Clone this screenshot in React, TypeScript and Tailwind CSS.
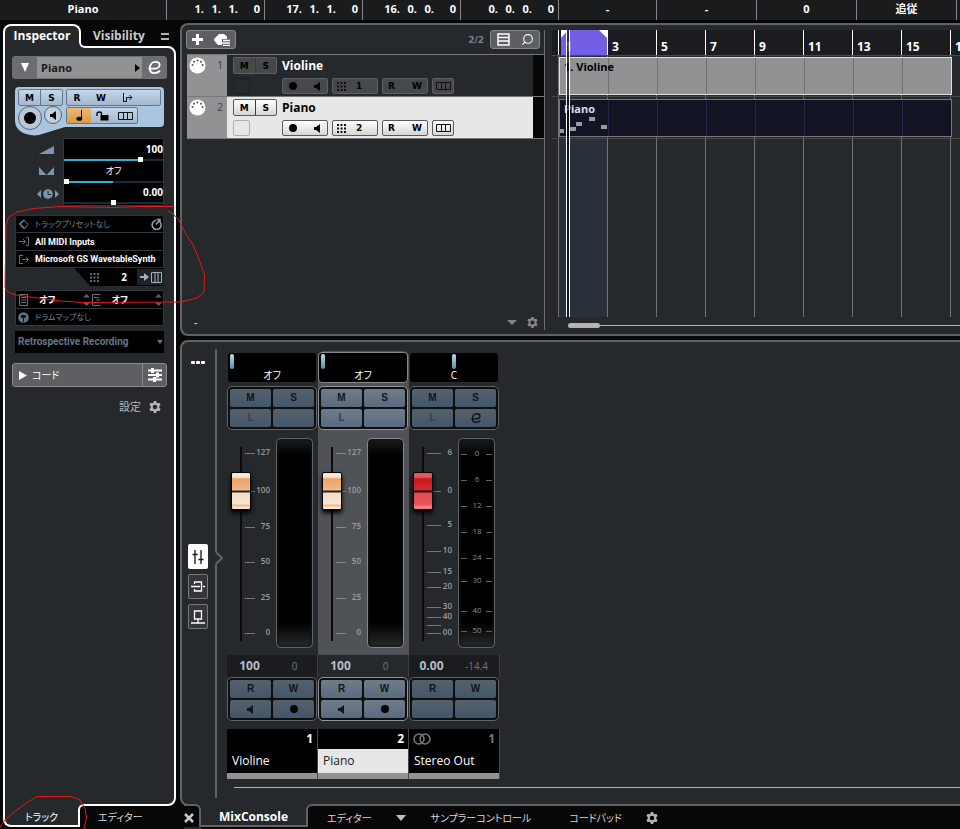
import React from "react";
import { Search } from "lucide-react";

const positions = [
  ["1.", "1.", "1.", "0"],
  ["17.", "1.", "1.", "0"],
  ["16.", "0.", "0.", "0"],
  ["0.", "0.", "0.", "0"],
];

const Speaker = ({ className = "" }: { className?: string }) => (
  <svg width="7" height="9" viewBox="0 0 7 9" className={className} fill="currentColor" aria-hidden="true">
    <path d="M0 3h2L6 0v9L2 6H0z" />
  </svg>
);

const Dot = () => <span className="block size-2 rounded-full bg-black" />;

const GridDots = ({ color }: { color: string }) => (
  <svg width="9" height="9" viewBox="0 0 9 9" fill={color} aria-hidden="true">
    {[0, 3.5, 7].map((y) => [0, 3.5, 7].map((x) => <rect key={`${x}-${y}`} x={x} y={y} width="2" height="2" />))}
  </svg>
);

const Lanes = ({ color = "#111" }: { color?: string }) => (
  <svg width="15" height="8" viewBox="0 0 15 8" fill="none" stroke={color} aria-hidden="true">
    <path d="M.5 .5h14v7H.5zM5.5 .5v7M9.5 .5v7" />
  </svg>
);

const EditGlyph = ({ size, color }: { size: number; color: string }) => (
  <svg width={size} height={size} viewBox="0 0 14 14" fill="none" stroke={color} strokeWidth="2" aria-hidden="true">
    <path d="M0.500 8.200H7C10 8.200 12.500 6.500 12.500 4.300 12.500 2 10.500 1 8 1 4.500 1 2 4 2 8 2 11.500 4 13 7 13 9.500 13 11.500 12 13 10.500" />
  </svg>
);

const Gear = ({ color, size = 12 }: { color: string; size?: number }) => (
  <svg width={size} height={size} viewBox="0 0 12 12" fill={color} fillRule="evenodd" aria-hidden="true">
    <path d="M4.800 0h2.400l.4 1.700 1.100.6 1.700-.5 1.200 2.100-1.300 1.200v1.800l1.300 1.200-1.200 2.100-1.700-.5-1.100.6L7.200 12H4.800l-.4-1.700-1.100-.6-1.700.5L.400 8.100l1.300-1.200V5.100L.400 3.900l1.200-2.100 1.700.5 1.100-.6zM6 3.700a2.300 2.300 0 1 0 0 4.600 2.300 2.300 0 0 0 0-4.600z" />
  </svg>
);

function TransportBar() {
  return (
    <header className="flex h-5 shrink-0 bg-[#191b1d] pr-[3px] font-bold text-white">
      <div className="flex w-[167px] shrink-0 items-center justify-center border-r border-[#85878a] pb-0.5">Piano</div>
      <div className="grid flex-1 grid-cols-[98fr_98fr_98fr_98fr_98fr_100fr_100fr_100fr]">
        {positions.map((p, i) => (
          <div key={i} className="flex items-center justify-end border-r border-[#85878a] pr-1 pb-0.5">
            <span>{p[0]}</span>
            <span className="w-[17px] text-right">{p[1]}</span>
            <span className="w-[17px] text-right">{p[2]}</span>
            <span className="w-[22px] text-right">{p[3]}</span>
          </div>
        ))}
        {["-", "-", "0", "追従"].map((t, i) => (
          <div key={i} className="flex items-center justify-center border-r border-[#85878a] pb-0.5">
            {t}
          </div>
        ))}
      </div>
    </header>
  );
}

function InspectorHeader() {
  return (
    <div className="flex h-[23px] items-center rounded-[3px] border border-[#6f7072] bg-[#929294]">
      <button aria-label="Collapse" className="flex h-full w-6 items-center justify-center bg-[#6c6d70]">
        <svg width="8" height="9" viewBox="0 0 8 9" fill="#fff"><path d="M0 0h8L4 9z" /></svg>
      </button>
      <span className="flex-1 pl-1 font-bold text-[#1a1a1c]">Piano</span>
      <svg width="5" height="8" viewBox="0 0 5 8" className="mr-0.5"><path d="M0 0l5 4-5 4z" fill="#000" /></svg>
      <button aria-label="Edit channel" className="flex h-full w-6 items-center justify-center bg-[#6c6d70]">
        <EditGlyph size={13} color="#fff" />
      </button>
    </div>
  );
}

const blueBox = "flex h-[17px] items-center rounded-[2px] border border-[#66788a] bg-linear-to-b from-[#c6d8ea] to-[#a2b8d0]";

function TrackControls() {
  return (
    <div className="relative mx-[3px] mt-2 h-[49px]">
      <svg className="absolute inset-0 h-full w-full" viewBox="0 0 149 49" preserveAspectRatio="none" aria-hidden="true">
        <path d="M4 0H145a4 4 0 0 1 4 4V36a4 4 0 0 1-4 4H50L24 48C12 50 0 44 0 34V4a4 4 0 0 1 4-4z" fill="#abc5df" />
      </svg>
      <div className="relative px-[3px] pt-0.5 font-['DejaVu_Sans'] text-[9px] font-bold text-black">
        <div className="flex gap-[3px]">
          <div className={blueBox + " w-[45px]"}>
            <button className="h-full flex-1 border-r border-[#66788a]">M</button>
            <button className="h-full flex-1">S</button>
          </div>
          <div className={blueBox + " flex-1"}>
            <button className="w-6 pr-1">R</button>
            <button className="w-6 pr-1">W</button>
            <button aria-label="Lane mode" className="flex w-6 justify-center">
              <svg width="11" height="10" viewBox="0 0 11 10" fill="none" stroke="#111"><path d="M1.500 0v8.500h3M4.500 8.500v-4h5M7.500 2l2.500 2.500L7.500 7" /></svg>
            </button>
          </div>
        </div>
        <div className="flex">
          <button aria-label="Record enable" className="flex size-6 items-center justify-center rounded-full border border-[#55626e] bg-[#b9c6d4]">
            <span className="size-3 rounded-full bg-black" />
          </button>
          <button aria-label="Monitor" className="ml-0.5 flex size-[18px] items-center justify-center rounded-full border border-[#55626e] bg-[#c3d1df] text-black">
            <Speaker />
          </button>
          <div className={blueBox + " mt-px ml-1 w-[72px]"}>
            <button aria-label="Musical time base" className="flex h-full w-6 items-center justify-center bg-linear-to-b from-[#e9b877] to-[#d89a48]">
              <svg width="7" height="11" viewBox="0 0 7 11"><path d="M5 0h1v8H5z" fill="#000" /><ellipse cx="3.300" cy="8.800" rx="2.900" ry="2" fill="#000" /></svg>
            </button>
            <button aria-label="Lock" className="flex w-[22px] justify-center">
              <svg width="13" height="10" viewBox="0 0 13 10"><path d="M4.500 4h8v5.500h-8z" fill="#000" /><path d="M1 5V2.500C1 .500 5.500 .500 5.500 2.500V5" fill="none" stroke="#000" strokeWidth="1.300" /></svg>
            </button>
            <button aria-label="Lanes" className="flex flex-1 justify-center"><Lanes /></button>
          </div>
        </div>
      </div>
    </div>
  );
}

const hSlider =
  "block h-[5px] w-full appearance-none bg-center bg-no-repeat bg-size-[100%_2px] [&::-webkit-slider-thumb]:h-[5px] [&::-webkit-slider-thumb]:w-[5px] [&::-webkit-slider-thumb]:appearance-none [&::-webkit-slider-thumb]:bg-white";

function ChannelSliders() {
  return (
    <div className="mx-[3px] mt-0.5 flex">
      <div className="flex w-12 flex-col items-end gap-3 pt-2 pr-2">
        <svg width="16" height="9" viewBox="0 0 16 9"><path d="M0 8L15 0v8z" fill="#7f93ad" /></svg>
        <svg width="16" height="10" viewBox="0 0 16 10"><path d="M0 0l7.500 8L15 0v8H0z" fill="#7f93ad" /></svg>
        <svg width="22" height="10" viewBox="0 0 22 10" className="-mr-1">
          <path d="M4 1v8L0 5zM18 1v8l4-4z" fill="#7f93ad" />
          <circle cx="11" cy="5" r="4.800" fill="#7f93ad" />
          <path d="M11 2v3.500h3" stroke="#22262a" fill="none" />
        </svg>
      </div>
      <div className="flex-1 rounded-[2px] border border-[#30363d] bg-black text-white">
        <div className="flex h-[23px] flex-col">
          <span className="h-[18px] pt-0.5 text-right text-[10px] leading-4 font-bold">100</span>
          <input aria-label="Volume" type="range" min={0} max={127} defaultValue={100} className={hSlider + " bg-[linear-gradient(to_right,#35aed0_78%,#1c2836_78%)]"} />
        </div>
        <div className="flex h-[22px] flex-col">
          <span className="h-[17px] pt-px text-center text-[9px] leading-4">オフ</span>
          <input aria-label="Pan" type="range" min={-64} max={64} defaultValue={-64} className={hSlider + " bg-[linear-gradient(to_right,#35aed0_50%,#1c2836_50%)]"} />
        </div>
        <div className="flex h-[21px] flex-col">
          <span className="h-4 text-right text-[10px] leading-4 font-bold">0.00</span>
          <input aria-label="Delay" type="range" min={-100} max={100} defaultValue={0} className={hSlider + " bg-[linear-gradient(to_right,#1c2836,#1c2836)]"} />
        </div>
      </div>
    </div>
  );
}

const UpDown = () => (
  <svg width="7" height="12" viewBox="0 0 7 12" fill="#4f6672" aria-hidden="true"><path d="M0 3.500L3.500 0 7 3.500zM0 8.500L3.500 12 7 8.500z" /></svg>
);

function Routing() {
  return (
    <div className="mx-[3px] mt-[9px] text-[10px] font-bold text-white">
      <div className="rounded-[2px] border border-[#2d3238] bg-black">
        <button className="flex h-[17px] w-full items-center border-b border-[#30363c] text-left">
          <svg width="10" height="11" viewBox="0 0 10 11" className="ml-[3px]" fill="none" stroke="#687e92"><path d="M5 1L9 5.500 6 9.500 1 5z" /><path d="M5 1L1 5l4 4.500" strokeWidth="1.600" /></svg>
          <span className="flex-1 pl-[6px] text-[8px] font-normal text-[#6d8299]">トラックプリセットなし</span>
          <svg width="12" height="12" viewBox="0 0 12 12" className="mr-px" fill="none" stroke="#8fa3b4" strokeWidth="1.500"><path d="M9.500 3.500A4.500 4.500 0 1 1 6 2.500M6 6.500l4-5M6.500 1.500H10v3.500" /></svg>
        </button>
        <button className="flex h-[18px] w-full items-center border-b border-[#30363c] text-left">
          <svg width="11" height="9" viewBox="0 0 11 9" className="ml-[3px]" fill="none" stroke="#5e7585"><path d="M0 4.500h6M4 2l2.500 2.500L4 7M7 .500h2.500v8H7" /></svg>
          <span className="pl-[5px] font-['Roboto'] text-[9px]">All MIDI Inputs</span>
        </button>
        <button className="flex h-4 w-full items-center text-left">
          <svg width="11" height="9" viewBox="0 0 11 9" className="ml-[3px] shrink-0" fill="none" stroke="#5e7585"><path d="M4 .500H.500v8H4M3 4.500h6M7 2l2.500 2.500L7 7" /></svg>
          <span className="pl-[5px] font-['Roboto'] text-[9px] whitespace-nowrap">Microsoft GS WavetableSynth</span>
        </button>
      </div>
      <div className="ml-[59px] flex h-[18px] items-center bg-black [clip-path:polygon(0_0,100%_0,100%_100%,16px_100%)]">
        <span className="ml-4"><GridDots color="#5b6d78" /></span>
        <span className="flex-1 pr-[10px] text-right">2</span>
        <button aria-label="Edit instrument" className="flex h-4 w-[27px] items-center justify-center gap-0.5 bg-[#1d2428]">
          <svg width="9" height="8" viewBox="0 0 9 8" fill="#9fb1be"><path d="M0 3h4V0l5 4-5 4V5H0z" /></svg>
          <svg width="11" height="11" viewBox="0 0 11 11" fill="none" stroke="#9fb1be"><path d="M.500 .500h10v10H.500zM4 1v9M7 1v9" /></svg>
        </button>
      </div>
      <div className="mt-1 rounded-[2px] border border-[#30363c] bg-black">
        <div className="flex h-[18px] items-center border-b border-[#30363c]">
          <svg width="9" height="12" viewBox="0 0 9 12" className="ml-[3px]" fill="none" stroke="#5e7585"><path d="M.500 .500h8v11h-8zM2 3.500h5M2 6h5M2 8.500h5" /></svg>
          <span className="flex-1 pr-4 text-center text-[9px]">オフ</span>
          <UpDown />
          <svg width="9" height="12" viewBox="0 0 9 12" className="ml-0.5" fill="none" stroke="#5e7585"><path d="M8.500 .500h-8v11h8M2 3.500h5M4 6h4M2 8.500h5" /></svg>
          <span className="flex-1 pr-4 text-center text-[9px]">オフ</span>
          <span className="mr-px"><UpDown /></span>
        </div>
        <button className="flex h-4 w-full items-center text-left">
          <svg width="11" height="11" viewBox="0 0 11 11" className="ml-0.5"><circle cx="5.500" cy="5.500" r="5.300" fill="#5e7585" /><path d="M5.500 4v6M3.500 3.500h4v2h-4z" stroke="#0a0d10" fill="#0a0d10" /></svg>
          <span className="pl-[6px] text-[8px] font-normal text-[#6d8299]">ドラムマップなし</span>
        </button>
      </div>
      <button className="mt-[5px] flex h-[22px] w-full items-center justify-between bg-black pr-px pl-[3px] font-['Roboto'] text-[10px] font-bold text-[#64758c]">
        Retrospective Recording
        <svg width="6" height="4" viewBox="0 0 6 4" fill="#64758c"><path d="M0 0h6L3 4z" /></svg>
      </button>
    </div>
  );
}

function Inspector() {
  return (
    <aside className="ml-[3px] flex w-[173px] shrink-0 flex-col pt-1">
      <nav className="relative z-10 -mb-0.5 flex h-6 shrink-0 text-white">
        <div className="flex w-[78px] flex-col border-l-2 border-transparent">
          <button className="-ml-0.5 h-6 rounded-t-lg border-2 border-b-0 border-white bg-[#25292c] pb-0.5 text-xs font-bold">Inspector</button>
        </div>
        <div className="-ml-0.5 flex h-full w-2 items-end">
          <div className="h-2.5 w-full bg-[#25292c]"><div className="h-full rounded-bl-md border-b-2 border-l-2 border-white bg-[#070707]" /></div>
        </div>
        <button className="ml-1.5 text-xs font-bold text-[#c9cacc]">Visibility</button>
        <button aria-label="Menu" className="mt-[9px] mr-[7px] ml-auto h-[7px] w-2 border-y-2 border-[#b4b5b7]" />
      </nav>
      <div className="flex-1 rounded-tr-lg rounded-br-lg border-2 border-white bg-[#25292c] px-[7px] pt-2">
        <InspectorHeader />
        <TrackControls />
        <ChannelSliders />
        <Routing />
        <div className="mt-2.5 flex h-6 items-center rounded-[3px] border border-[#8a8b8e] bg-[#5d5f63] text-white">
          <svg width="8" height="9" viewBox="0 0 8 9" className="ml-1.5" fill="#fff"><path d="M0 0l8 4.500L0 9z" /></svg>
          <span className="flex-1 pl-[5px] text-[10px]">コード</span>
          <button aria-label="Chord settings" className="flex h-full w-6 items-center justify-center border-l border-[#8a8b8e]">
            <svg width="14" height="14" viewBox="0 0 14 14" fill="#fff"><path d="M0 1.500h14v2H0zM0 6h14v2H0zM0 10.500h14v2H0zM3 0h3v5H3zM8 4.500h3v5H8zM5 9h3v5H5z" /></svg>
          </button>
        </div>
        <button className="mt-3 mr-[6px] ml-auto flex items-center gap-2 text-[11px] leading-4 text-[#b4b5b7]">
          設定 <Gear color="#b4b5b7" />
        </button>
      </div>
      <nav className="relative z-10 -mt-0.5 flex h-[25px] shrink-0 text-[10px] text-[#d6d6d8]">
        <button className="h-[23px] w-[75px] rounded-bl-lg border-b-2 border-l-2 border-white bg-[#25292c] pt-1 text-white">トラック</button>
        <div className="h-[23px] w-2 bg-[#25292c]"><div className="h-full rounded-tl-md border-t-2 border-l-2 border-white bg-[#070707]" /></div>
        <button className="ml-3">エディター</button>
      </nav>
    </aside>
  );
}

const MidiIcon = () => (
  <svg width="17" height="17" viewBox="0 0 17 17" aria-hidden="true">
    <circle cx="8.500" cy="8.500" r="8" fill="#fff" />
    <g fill="#555"><circle cx="3.500" cy="8" r="1" /><circle cx="5" cy="4.800" r="1" /><circle cx="8.500" cy="3.500" r="1" /><circle cx="12" cy="4.800" r="1" /><circle cx="13.500" cy="8" r="1" /></g>
  </svg>
);

function TrackRow({ n, name, selected }: { n: number; name: string; selected?: boolean }) {
  const box = selected
    ? "flex h-4 items-center rounded-[2px] border border-[#5a5a5c] bg-linear-to-b from-white to-[#d4d5d7]"
    : "flex h-4 items-center rounded-[2px] border border-[#5c6063] bg-[#45494c]";
  return (
    <div className={"flex h-[42px] border-b border-[#76787a] text-black " + (selected ? "bg-[#e7e7e8]" : "bg-[#25292c]")}>
      <div className="flex w-10 shrink-0 items-start justify-between bg-[#929294] pt-[2px] pr-1 pl-0.5">
        <MidiIcon />
        <span className="text-[10px] leading-[17px] text-[#3c3c3e]">{n}</span>
      </div>
      <div className="flex-1 pt-[2px] pl-[6px] font-['DejaVu_Sans'] text-[9px] font-bold">
        <div className="flex h-[17px] items-center">
          <div className={box + " h-[17px] w-11"}>
            <button className="h-full flex-1 border-r border-[#3a3a3c]">M</button>
            <button className="h-full flex-1">S</button>
          </div>
          <span className={"pl-[5px] font-['Open_Sans'] text-xs font-bold " + (selected ? "text-black" : "text-white")}>{name}</span>
        </div>
        <div className="mt-1 flex">
          <button aria-label="Lock" className={"mr-8 h-4 w-[17px] rounded-[2px] border " + (selected ? "border-[#b0b0b2]" : "border-[#1b1e20]")} />
          <div className={box + " mr-1 w-[46px] shrink-0 justify-between pr-2 pl-1.5"}><Dot /><Speaker className="-mr-0.5" /></div>
          <div className={box + " mr-1 w-[46px] shrink-0 gap-[10px] pl-1"}><GridDots color="#111" />{n}</div>
          <div className={box + " mr-1 w-[46px] shrink-0 justify-between px-[5px]"}><button>R</button><button>W</button></div>
          <div className={box + " w-[22px] shrink-0 justify-center"}><Lanes /></div>
        </div>
      </div>
      <div className="w-[11px] bg-[#070707]" />
    </div>
  );
}

function TrackList() {
  return (
    <section className="flex w-[363px] shrink-0 flex-col pt-[5px]">
      <div className="flex-1 border-r border-[#6b6d70] pl-1">
        <div className="flex h-6 items-start">
          <div className="flex h-[19px] w-[50px] items-center justify-around rounded-[3px] border border-[#85878a] bg-[#5d5f63]">
            <button aria-label="Add track"><svg width="11" height="11" viewBox="0 0 11 11" fill="#fff"><path d="M4 0h3v4h4v3H7v4H4V7H0V4h4z" /></svg></button>
            <button aria-label="Track presets"><svg width="16" height="12" viewBox="0 0 16 12"><path d="M5 0h5l3 2.500V5H8v6H4L0 6.500V5z" fill="#fff" /><path d="M9 6.500h7M7 9h9M9 11.500h7" stroke="#fff" strokeWidth="1.300" /></svg></button>
          </div>
          <span className="mr-[6px] ml-auto pt-1 font-['DejaVu_Sans'] text-[9px] leading-3 font-bold text-[#7b828a]">2/2</span>
          <div className="mr-1 flex h-[19px] w-[50px] items-center justify-around rounded-[3px] border border-[#85878a] bg-[#5d5f63]">
            <button aria-label="Divide list"><svg width="13" height="13" viewBox="0 0 13 13" fill="none" stroke="#fff" strokeWidth="1.500"><path d="M1 1h11v11H1zM1 4.500h11M1 8h11" /></svg></button>
            <button aria-label="Find"><Search size={13} color="#fff" className="-scale-x-100" /></button>
          </div>
        </div>
        <div className="ml-px border-t border-[#76787a]">
          <TrackRow n={1} name="Violine" />
          <TrackRow n={2} name="Piano" selected />
        </div>
      </div>
      <div className="mb-1 flex h-[22px] items-center border-r border-[#6b6d70] pt-1.5 pr-[6px] pl-3 text-white">
        <span className="flex-1">-</span>
        <svg width="10" height="5" viewBox="0 0 10 5" fill="#85878a" className="mr-2.5"><path d="M0 0h10L5 5z" /></svg>
        <button aria-label="Track list settings"><Gear color="#85878a" size={11} /></button>
      </div>
    </section>
  );
}

const bars = [1, 3, 5, 7, 9, 11, 13, 15];
const notes = [
  [0, 29], [10, 27], [16, 22], [29, 17], [41, 25],
];

function Timeline() {
  return (
    <section className="flex min-w-0 flex-1 flex-col overflow-hidden pt-[5px] pl-[7px]">
      <div className="relative flex flex-1 flex-col">
        <div className="flex h-[25px] bg-[#1b1c20] pl-1.5 text-xs font-bold text-white">
          {bars.map((b) => (
            <div key={b} className="w-[49px] shrink-0 border-l border-white">
              <div className={"flex h-full items-end pl-1 " + (b === 1 ? "ml-0.5 bg-[#735fe6] pl-0.5" : "")}>{b}</div>
            </div>
          ))}
          <div className="flex flex-1 items-end border-l border-white pl-1">17</div>
        </div>
        <div className="relative flex-1">
          <div className="absolute inset-0 flex pl-1.5">
            {bars.map((b) => (
              <div key={b} className={"w-[49px] shrink-0 border-l border-[#707274] " + (b === 1 ? "bg-[#28303a]" : "")} />
            ))}
            <div className="border-l border-[#707274]" />
          </div>
          <div className="relative h-[42px] border-y border-[#46494c] pt-px pl-[7px]">
            <div className="relative h-[38px] w-[393px] border border-[#e0e0e0] bg-[#929294]">
              <div className="flex h-full">
                {bars.map((b) => <div key={b} className="w-[49px] shrink-0 border-r border-[#707072] last:border-0" />)}
              </div>
              <span className="absolute top-px left-1 text-[11px] leading-4 font-bold text-black">1. Violine</span>
            </div>
          </div>
          <div className="relative h-[42px] border-b border-[#46494c] pt-0.5 pl-[7px]">
            <div className="relative h-[38px] w-[393px] border border-[#77777a] bg-[#121323]">
              <div className="flex h-full">
                {bars.map((b) => <div key={b} className="w-[49px] shrink-0 border-r border-[#26264c] last:border-0" />)}
              </div>
              <span className="absolute top-px left-1 text-[11px] leading-4 font-bold text-[#dcdcf4]">Piano</span>
              <svg className="absolute top-0 left-0" width="49" height="36" fill="#9a9a9e" aria-hidden="true">
                {notes.map(([x, y]) => <rect key={x} x={x} y={y} width={x === 0 ? 4 : 6} height="4" />)}
              </svg>
            </div>
          </div>
        </div>
        <svg className="absolute top-0 left-[9px]" width="46" height="8" fill="#fff" aria-hidden="true"><path d="M0 0h7L0 8zM46 0h-8l8 8z" /></svg>
        <div className="absolute inset-y-0 left-3.5 w-1 border-x border-white bg-black/60" />
      </div>
      <div className="flex h-[17px] items-center pl-4">
        <div className="h-[5px] w-8 rounded-full bg-[#b5b1b4]" />
        <div className="h-px flex-1 bg-[#b5b1b4]" />
      </div>
    </section>
  );
}

interface Strip {
  name: string; pan: string; vol: string; peak: string; num: string;
  panAt: string; selected?: boolean; output?: boolean;
}
const strips: Strip[] = [
  { name: "Violine", pan: "オフ", vol: "100", peak: "0", num: "1", panAt: "ml-0.5" },
  { name: "Piano", pan: "オフ", vol: "100", peak: "0", num: "2", panAt: "ml-0.5", selected: true },
  { name: "Stereo Out", pan: "C", vol: "0.00", peak: "-14.4", num: "1", panAt: "mx-auto", output: true },
];
const midiScale: [string, number][] = [["127", 23], ["100", 61], ["75", 97], ["50", 132], ["25", 168], ["0", 203]];
const outScale: [string, number][] = [["6", 23], ["0", 61], ["5", 95], ["10", 121], ["15", 142], ["20", 157], ["30", 177], ["40", 187], ["", 195], ["00", 203]];
const meterScale: [string, number][] = [["0", 24], ["6", 50], ["12", 76], ["18", 102], ["24", 128], ["30", 151], ["40", 181], ["50", 201]];

function FaderArea({ s }: { s: Strip }) {
  const scale = s.output ? outScale : midiScale;
  const id = "meter-" + s.name.replace(" ", "");
  const thumb = s.output
    ? "[&::-webkit-slider-thumb]:bg-[linear-gradient(#e2575c_0_4px,#c4181d_6px,#d62a2f_17px,#111_18px_19px,#e34a4e_20px,#e8555a_32px,#f08084_33px)]"
    : "[&::-webkit-slider-thumb]:bg-[linear-gradient(#fbe6d2_0_4px,#eaa368_6px,#f2b988_17px,#222_18px_19px,#f4dcc0_20px,#f8e6d2_31px,#eeb98a_32px,#fbe8d6_35px)]";
  return (
    <div className="grid h-[225px]">
      <svg className="[grid-area:1/1]" width="91" height="225" viewBox="0 0 91 225" aria-hidden="true">
        <defs>
          <linearGradient id={id} x1="0" y1="0" x2="0" y2="1">
            <stop offset="0" stopColor="#1c1c1e" /><stop offset=".08" stopColor="#000" />
            <stop offset=".88" stopColor="#000" /><stop offset="1" stopColor="#2a2a2c" />
          </linearGradient>
        </defs>
        <rect x="13" y="17" width="2" height="194" fill="#0c0c0d" />
        <rect x="49.500" y="8.500" width="36" height="209" rx="4" fill={`url(#${id})`} stroke={s.selected ? "#85878a" : "#5f6266"} />
        <rect x="51" y="10" width="33" height="206" rx="3" fill="none" stroke="#111213" />
        {scale.map(([t, y]) => (
          <g key={y}>
            <path d={`M18 ${y + 0.5}H${s.output ? 32 : 28}`} stroke={s.selected ? "#85888c" : "#74777b"} />
            <text x="43" y={y + 2} textAnchor="end" fontSize="8" fontWeight="600" fill="#9a9ea4">{t}</text>
          </g>
        ))}
        {s.output && meterScale.map(([t, y]) => (
          <g key={y}>
            <path d={`M52 ${y + 0.5}h6M77 ${y + 0.5}h6`} stroke="#5c5f63" />
            <text x="68" y={y + 2} textAnchor="middle" fontSize="8" fill="#8a8d91">{t}</text>
          </g>
        ))}
      </svg>
      <input
        type="range" min={0} max={127} defaultValue={100} aria-label={s.name + " level"}
        className={"mt-1 ml-1 h-[218px] w-5 appearance-none bg-transparent [direction:rtl] [grid-area:1/1] [writing-mode:vertical-lr] [&::-webkit-slider-thumb]:h-[38px] [&::-webkit-slider-thumb]:w-5 [&::-webkit-slider-thumb]:appearance-none [&::-webkit-slider-thumb]:rounded-[2px] [&::-webkit-slider-thumb]:border [&::-webkit-slider-thumb]:border-black [&::-webkit-slider-thumb]:shadow-[0_3px_4px_#000] " + thumb}
      />
    </div>
  );
}

function Pad({ cells, selected, dimL }: { cells: React.ReactNode[]; selected?: boolean; dimL?: boolean }) {
  return (
    <div className={"mr-px grid h-11 grid-cols-2 grid-rows-2 gap-0.5 rounded-[5px] border bg-[#0d0f11] p-0.5 font-['Liberation_Sans'] text-[10px] font-bold " + (selected ? "border-[#919396]" : "border-[#606266]")}>
      {cells.map((c, i) => (
        <button key={i} className={"flex items-center justify-center rounded-[2px] bg-linear-to-b " + (selected ? "from-[#6f7c8a] to-[#5a6b80]" : "from-[#56616c] to-[#43566b]") + (dimL && i === 2 ? " text-[#33404c]" : " text-[#121416]")}>
          {c}
        </button>
      ))}
    </div>
  );
}

function ChannelStrip({ s }: { s: Strip }) {
  return (
    <div className="w-[91px]">
      <div className={"pt-px " + (s.selected ? "rounded-t-md bg-[#4f5256]" : "")}>
        <div className={"mr-px mb-[3px] h-[31px] rounded-[4px] border bg-black text-center text-[10px] leading-3 text-white " + (s.selected ? "border-[#85878a]" : "border-[#25292c]")}>
          <div className={"mt-px h-[15px] w-1 rounded-sm bg-linear-to-b from-[#b8dcea] to-[#5590a8] " + s.panAt} />
          <div>{s.pan}</div>
        </div>
        <Pad selected={s.selected} dimL cells={["M", "S", "L", s.output ? <EditGlyph key="e" size={10} color="#111" /> : ""]} />
        <FaderArea s={s} />
      </div>
      <div className={"flex h-[22px] items-center border-r border-[#3c4044] " + (s.selected ? "bg-[#25292c]" : "bg-[#1a1c1f]")}>
        <span className="w-[45px] text-center text-xs font-bold text-[#b4bfcb]">{s.vol}</span>
        <span className="flex-1 text-center text-[10px] text-[#73777b]">{s.peak}</span>
      </div>
      <Pad selected={s.selected} cells={["R", "W", s.output ? "" : <Speaker key="s" />, s.output ? "" : <Dot key="d" />]} />
      <div className="mt-2 border-r border-[#46494c] bg-black text-xs text-white">
        <div className="flex h-5 items-center justify-between px-1 font-bold">
          {s.output ? (
            <svg width="18" height="12" viewBox="0 0 18 12" fill="none" stroke="#77797c" strokeWidth="1.500" aria-hidden="true"><circle cx="6" cy="6" r="5" /><circle cx="12" cy="6" r="5" /></svg>
          ) : <span />}
          <span className={s.output ? "text-[#77797c]" : ""}>{s.num}</span>
        </div>
        <div className={"flex h-6 items-center pl-[5px] " + (s.selected ? "bg-[#e7e7e8] text-[#222]" : "")}>{s.name}</div>
        <div className="h-1.5 bg-[#929294]" />
      </div>
    </div>
  );
}

function MixConsole() {
  return (
    <section className="mt-1 flex flex-1 flex-col">
      <div className="flex flex-1 rounded-l-lg border-2 border-r-0 border-[#5f6266] bg-[#25292c]">
        <div className="flex w-[33px] shrink-0 flex-col pt-[19px] pl-1.5">
          <button aria-label="Functions" className="mb-[180px] flex gap-px pl-[3px]">
            {[0, 1, 2].map((i) => <span key={i} className="h-[3px] w-1 rounded-[1px] bg-white" />)}
          </button>
          <button aria-label="Faders" className="mb-[5px] flex h-[25px] w-5 items-center justify-center rounded-[2px] bg-white">
            <svg width="12" height="14" viewBox="0 0 12 14" fill="none" stroke="#111" strokeWidth="1.300"><path d="M3 0v14M9 0v14M.500 4.500h5M6.500 9.500h5" /></svg>
          </button>
          <button aria-label="Inserts" className="mb-[5px] flex h-[25px] w-5 items-center justify-center rounded-[2px] border border-[#76787a] bg-[#33363a]">
            <svg width="14" height="11" viewBox="0 0 14 11" fill="none" stroke="#fff" strokeWidth="1.300"><path d="M3.500 3V1h7v9h-7V8M0 5.500h9M12 5.500h2" /></svg>
          </button>
          <button aria-label="Sends" className="flex h-[25px] w-5 items-center justify-center rounded-[2px] border border-[#76787a] bg-[#33363a]">
            <svg width="14" height="14" viewBox="0 0 14 14" fill="none" stroke="#fff" strokeWidth="1.300"><path d="M3.500 1h7v8h-7zM7 9v4M0 13h14" /></svg>
          </button>
        </div>
        <div className="mt-[7px] mb-1.5 flex w-3 shrink-0 flex-col">
          <div className="h-[203px] w-0.5 bg-[#5f6266]" />
          <svg width="8" height="12" viewBox="0 0 8 12" fill="none" stroke="#5f6266" strokeWidth="2" aria-hidden="true"><path d="M1 0l6 6-6 6" /></svg>
          <div className="w-0.5 flex-1 bg-[#5f6266]" />
        </div>
        <div className="flex min-w-0 flex-1 flex-col pt-[9px]">
          <div className="flex">
            {strips.map((s) => <ChannelStrip key={s.name} s={s} />)}
          </div>
          <div className="mt-2 ml-[7px] h-px bg-[#b5b1b4]" />
        </div>
      </div>
      <nav className="relative z-10 -mt-0.5 flex h-[25px] shrink-0 text-[10px] text-[#d6d6d8]">
        <div className="ml-1 w-[17px] bg-[#25292c]">
          <div className="flex h-[23px] items-center rounded-tr-md border-t-2 border-r-2 border-[#5f6266] bg-[#070707] pt-0.5">
            <button aria-label="Close lower zone"><svg width="10" height="10" viewBox="0 0 10 10" stroke="#c8c8ca" strokeWidth="2.500"><path d="M1 1l8 8M9 1L1 9" /></svg></button>
          </div>
        </div>
        <button className="h-[23px] w-[105px] border-b-2 border-[#5f6266] bg-[#25292c] pt-1 text-xs font-bold text-white">MixConsole</button>
        <div className="h-[23px] flex-1 bg-[#25292c]">
          <div className="flex h-full items-center rounded-tl-md border-t-2 border-l-2 border-[#5f6266] bg-[#070707] pt-0.5 pl-[19px]">
            <button>エディター</button>
            <svg width="10" height="6" viewBox="0 0 10 6" fill="#c0c0c2" className="mr-[25px] ml-6"><path d="M0 0h10L5 6z" /></svg>
            <button className="mr-[38px]">サンプラーコントロール</button>
            <button className="mr-6">コードパッド</button>
            <button aria-label="Set up tabs"><Gear color="#b4b5b7" /></button>
          </div>
        </div>
      </nav>
    </section>
  );
}

function Annotations() {
  return (
    <svg className="pointer-events-none absolute top-0 left-0 z-20" width="220" height="829" fill="none" stroke="#e8161c" aria-hidden="true">
      <path d="M174 206.500L140 206.500 113 207.500 60 206.500 34 208.500 17 212 9 217 6 224 5 288 8 292 16 295 60 301 83 302.500 181 302 197 298 204 292 204.500 275 200 262 193 245 186 234 178 219 172 213 168 211" />
      <path d="M0 827L5 820 14 812 25 804 37 796.500 70 796.500 79 799 85 808 86.500 818 84 829" />
    </svg>
  );
}

export default function App() {
  return (
    <div className="relative flex min-h-screen flex-col overflow-hidden bg-[#070707] font-['Open_Sans','Noto_Sans_CJK_JP',sans-serif] text-[11px] leading-4 [font-feature-settings:'palt']">
      <TransportBar />
      <div className="flex flex-1">
        <Inspector />
        <main className="ml-1 flex min-w-0 flex-1 flex-col pt-[3px]">
          <div className="flex h-[313px] shrink-0 rounded-l-lg border-2 border-r-0 border-[#5f6266] bg-[#25292c]">
            <TrackList />
            <Timeline />
          </div>
          <MixConsole />
        </main>
      </div>
      <Annotations />
    </div>
  );
}
